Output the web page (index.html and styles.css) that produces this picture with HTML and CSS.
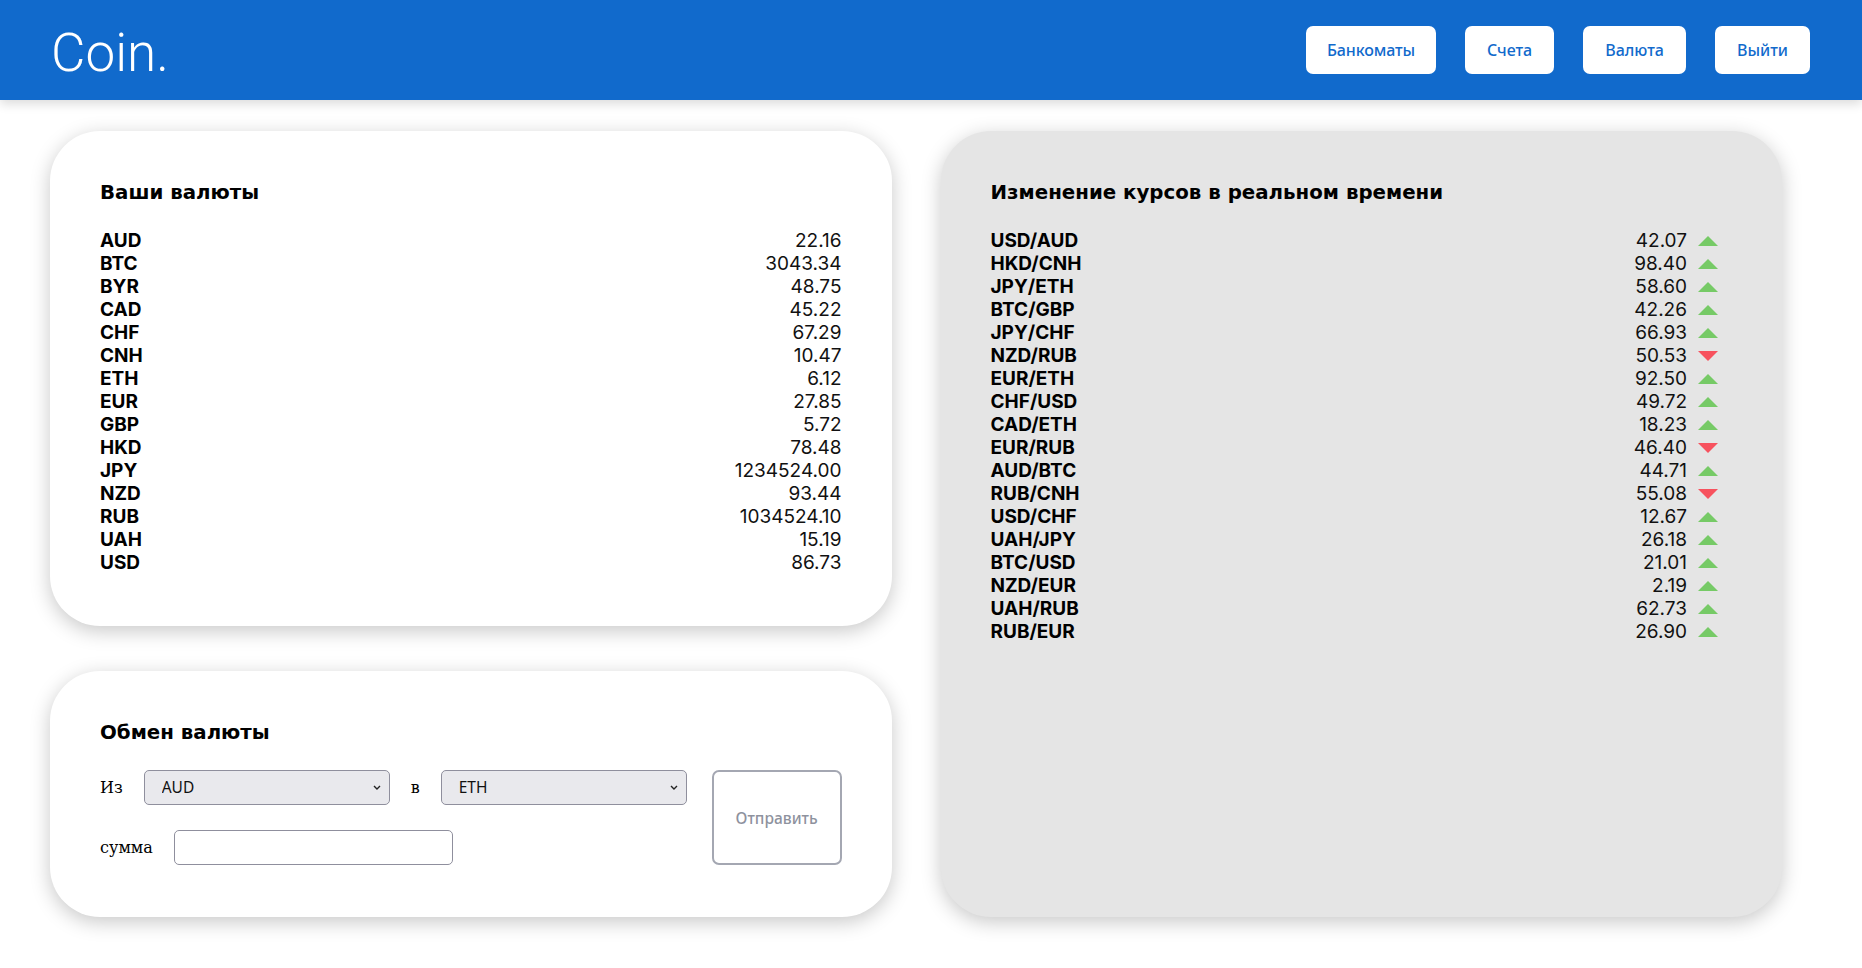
FILE: index.html
```html
<!DOCTYPE html>
<html lang="ru">
<head>
<meta charset="utf-8">
<title>Coin.</title>
<link rel="stylesheet" href="styles.css">
</head>
<body>
<header class="header">
  <div class="logo">Coin.</div>
  <nav class="nav">
    <button class="nav-btn nav-btn-wide">Банкоматы</button>
    <button class="nav-btn">Счета</button>
    <button class="nav-btn">Валюта</button>
    <button class="nav-btn">Выйти</button>
  </nav>
</header>
<main class="main">
  <div class="left-col">
    <section class="card">
      <h2 class="card-title">Ваши валюты</h2>
      <ul class="list">
        <li class="row"><span class="code">AUD</span><span class="num">22.16</span></li>
        <li class="row"><span class="code">BTC</span><span class="num">3043.34</span></li>
        <li class="row"><span class="code">BYR</span><span class="num">48.75</span></li>
        <li class="row"><span class="code">CAD</span><span class="num">45.22</span></li>
        <li class="row"><span class="code">CHF</span><span class="num">67.29</span></li>
        <li class="row"><span class="code">CNH</span><span class="num">10.47</span></li>
        <li class="row"><span class="code">ETH</span><span class="num">6.12</span></li>
        <li class="row"><span class="code">EUR</span><span class="num">27.85</span></li>
        <li class="row"><span class="code">GBP</span><span class="num">5.72</span></li>
        <li class="row"><span class="code">HKD</span><span class="num">78.48</span></li>
        <li class="row"><span class="code">JPY</span><span class="num">1234524.00</span></li>
        <li class="row"><span class="code">NZD</span><span class="num">93.44</span></li>
        <li class="row"><span class="code">RUB</span><span class="num">1034524.10</span></li>
        <li class="row"><span class="code">UAH</span><span class="num">15.19</span></li>
        <li class="row"><span class="code">USD</span><span class="num">86.73</span></li>
      </ul>
    </section>
    <section class="card card-exchange">
      <h2 class="card-title">Обмен валюты</h2>
      <form class="exchange">
        <div class="exchange-fields">
          <div class="field-row">
            <label class="lbl">Из</label>
            <div class="select-wrap">
              <select class="sel"><option>AUD</option></select>
              <svg class="chev" width="8" height="5" viewBox="0 0 8 5"><path d="M1 1 L4 4 L7 1" fill="none" stroke="#222" stroke-width="1.4"/></svg>
            </div>
            <label class="lbl">в</label>
            <div class="select-wrap">
              <select class="sel"><option>ETH</option></select>
              <svg class="chev" width="8" height="5" viewBox="0 0 8 5"><path d="M1 1 L4 4 L7 1" fill="none" stroke="#222" stroke-width="1.4"/></svg>
            </div>
          </div>
          <div class="field-row">
            <label class="lbl">сумма</label>
            <input class="amount" type="text">
          </div>
        </div>
        <button class="submit" type="button" disabled>Отправить</button>
      </form>
    </section>
  </div>
  <section class="card card-gray">
    <h2 class="card-title">Изменение курсов в реальном времени</h2>
    <ul class="list list-rates">
      <li class="row"><span class="code">USD/AUD</span><span class="num">42.07</span><span class="tri up"></span></li>
      <li class="row"><span class="code">HKD/CNH</span><span class="num">98.40</span><span class="tri up"></span></li>
      <li class="row"><span class="code">JPY/ETH</span><span class="num">58.60</span><span class="tri up"></span></li>
      <li class="row"><span class="code">BTC/GBP</span><span class="num">42.26</span><span class="tri up"></span></li>
      <li class="row"><span class="code">JPY/CHF</span><span class="num">66.93</span><span class="tri up"></span></li>
      <li class="row"><span class="code">NZD/RUB</span><span class="num">50.53</span><span class="tri down"></span></li>
      <li class="row"><span class="code">EUR/ETH</span><span class="num">92.50</span><span class="tri up"></span></li>
      <li class="row"><span class="code">CHF/USD</span><span class="num">49.72</span><span class="tri up"></span></li>
      <li class="row"><span class="code">CAD/ETH</span><span class="num">18.23</span><span class="tri up"></span></li>
      <li class="row"><span class="code">EUR/RUB</span><span class="num">46.40</span><span class="tri down"></span></li>
      <li class="row"><span class="code">AUD/BTC</span><span class="num">44.71</span><span class="tri up"></span></li>
      <li class="row"><span class="code">RUB/CNH</span><span class="num">55.08</span><span class="tri down"></span></li>
      <li class="row"><span class="code">USD/CHF</span><span class="num">12.67</span><span class="tri up"></span></li>
      <li class="row"><span class="code">UAH/JPY</span><span class="num">26.18</span><span class="tri up"></span></li>
      <li class="row"><span class="code">BTC/USD</span><span class="num">21.01</span><span class="tri up"></span></li>
      <li class="row"><span class="code">NZD/EUR</span><span class="num">2.19</span><span class="tri up"></span></li>
      <li class="row"><span class="code">UAH/RUB</span><span class="num">62.73</span><span class="tri up"></span></li>
      <li class="row"><span class="code">RUB/EUR</span><span class="num">26.90</span><span class="tri up"></span></li>
    </ul>
  </section>
</main>
</body>
</html>
```
FILE: styles.css
```css
* { box-sizing: border-box; }
html, body { margin: 0; padding: 0; background: #fff; }
body { font-family: "DejaVu Serif", serif; color: #000; }

.header {
  height: 100px;
  background: #116acc;
  display: flex;
  align-items: center;
  justify-content: space-between;
  padding: 0 52px 0 51px;
  box-shadow: 0 4px 10px rgba(0,0,0,0.14);
  position: relative;
  z-index: 1;
}
.logo {
  font-family: Roboto, "Liberation Sans", sans-serif;
  font-weight: 300;
  font-size: 53px;
  color: #fff;
  line-height: 1;
  padding-top: 6px;
}
.nav { display: flex; gap: 29px; }
.nav-btn {
  height: 48px;
  padding: 0 22px;
  border: none;
  border-radius: 7px;
  background: #fff;
  color: #116acc;
  font-family: "Noto Sans", "Open Sans", sans-serif;
  font-weight: 500;
  font-size: 16px;
}
.nav-btn-wide { padding: 0 21px; letter-spacing: -0.1px; }

.main {
  display: grid;
  grid-template-columns: 1fr 1fr;
  gap: 49px;
  padding: 31px 80px 50px 50px;
  align-items: stretch;
}
.left-col { display: flex; flex-direction: column; gap: 45px; }

.card {
  background: #fff;
  border-radius: 50px;
  padding: 51px 50px 52px;
  box-shadow: 0 5px 20px rgba(0,0,0,0.22);
}
.card-gray { background: #e5e5e5; }
.card-title {
  margin: 0 0 25px;
  font-family: "DejaVu Sans", sans-serif;
  font-weight: bold;
  font-size: 19.8px;
  line-height: 22px;
}
.list { list-style: none; margin: 0; padding: 0; }
.row {
  display: flex;
  align-items: center;
  height: 23px;
  font-family: Inter, "Liberation Sans", sans-serif;
  font-size: 19px;
  color: #000;
}
.code { flex: 1; font-weight: 700; }
.num { font-weight: 400; color: #111; }
.list-rates { padding-right: 14px; }
.tri {
  width: 0; height: 0;
  margin-left: 11px;
  border-left: 10px solid transparent;
  border-right: 10px solid transparent;
}
.tri.up { border-bottom: 10px solid #76ca66; }
.tri.down { border-top: 10px solid #f7525e; }

.card-exchange .card-title { margin-bottom: 26px; }
.exchange { display: flex; gap: 25px; align-items: stretch; }
.exchange-fields { display: flex; flex-direction: column; gap: 25px; }
.field-row { display: flex; align-items: center; gap: 21px; }
.lbl { font-family: "DejaVu Serif", serif; font-size: 16px; color: #000; }
.select-wrap { position: relative; width: 246px; height: 35px; }
.sel {
  appearance: none;
  -webkit-appearance: none;
  width: 100%;
  height: 100%;
  background: #e9e9ed;
  border: 1px solid #8f8f9d;
  border-radius: 5px;
  padding: 0 0 1px 17px;
  font-family: "Noto Sans", "Open Sans", sans-serif;
  font-size: 15.5px;
  color: #111;
}
.chev { position: absolute; right: 9px; top: 15px; pointer-events: none; }
.amount {
  width: 279px;
  height: 35px;
  border: 1px solid #8f8f9d;
  border-radius: 5px;
  background: #fff;
}
.submit {
  flex: 1;
  background: #fff;
  border: 2px solid #a4a7b2;
  border-radius: 7px;
  color: #8e929e;
  font-family: "Noto Sans", "Open Sans", sans-serif;
  font-weight: 500;
  font-size: 15.5px;
}
```
